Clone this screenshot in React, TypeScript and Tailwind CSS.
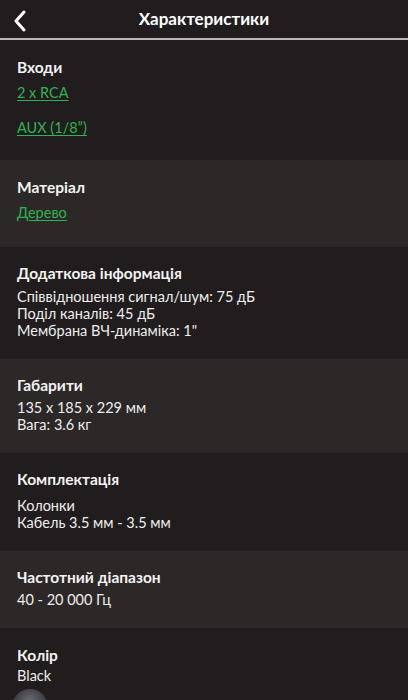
import { ReactNode } from 'react'

const font = { fontFamily: 'Lato, "Noto Sans", sans-serif' }

function Section({
  title,
  shade,
  children,
}: {
  title: string
  shade?: boolean
  children: ReactNode
}) {
  return (
    <section className={`px-[17px] pt-4 pb-5 ${shade ? 'bg-[#2c2828]' : 'bg-[#211d1e]'}`}>
      <h2 className="text-[15.5px] leading-5 font-bold text-[#f4f2f2]">{title}</h2>
      {children}
    </section>
  )
}

function Lines({ items, className = 'mt-1' }: { items: string[]; className?: string }) {
  return (
    <div className={`${className} text-[14.5px] leading-[17px] text-[#efeded]`}>
      {items.map((t) => (
        <div key={t}>{t}</div>
      ))}
    </div>
  )
}

export default function App() {
  return (
    <div className="w-[408px] h-[700px] overflow-hidden bg-[#211d1e]" style={font}>
      <header className="relative h-[38px] flex items-center justify-center border-b-2 border-[#b9b7b7] box-content">
        <button className="absolute left-[8px] top-[6px] p-1">
          <svg width="16" height="22" viewBox="0 0 16 22" fill="none">
            <path d="M12 2 L4 11 L12 20" stroke="#fff" strokeWidth="3" strokeLinecap="round" strokeLinejoin="round" />
          </svg>
        </button>
        <h1 className="text-[17px] font-bold text-white">Характеристики</h1>
      </header>

      <section className="px-[17px] pt-[17px] pb-[22px] bg-[#211d1e]">
        <h2 className="text-[15.5px] leading-5 font-bold text-[#f4f2f2]">Входи</h2>
        <div className="mt-[6px] flex flex-col gap-[15px] text-[14.5px] leading-5">
          <a className="text-[#2fb352] underline underline-offset-2">2 x RCA</a>
          <a className="text-[#2fb352] underline underline-offset-2">AUX (1/8”)</a>
        </div>
      </section>

      <section className="px-[17px] pt-[17px] pb-[24px] bg-[#2c2828]">
        <h2 className="text-[15.5px] leading-5 font-bold text-[#f4f2f2]">Матеріал</h2>
        <div className="mt-[6px] text-[14.5px] leading-5">
          <a className="text-[#2fb352] underline underline-offset-2">Дерево</a>
        </div>
      </section>

      <Section title="Додаткова інформація">
        <Lines
          className="mt-[5px]"
          items={[
            'Співвідношення сигнал/шум: 75 дБ',
            'Поділ каналів: 45 дБ',
            'Мембрана ВЧ-динаміка: 1"',
          ]}
        />
      </Section>

      <Section title="Габарити" shade>
        <Lines items={['135 x 185 x 229 мм', 'Вага: 3.6 кг']} />
      </Section>

      <Section title="Комплектація">
        <Lines className="mt-2" items={['Колонки', 'Кабель 3.5 мм - 3.5 мм']} />
      </Section>

      <Section title="Частотний діапазон" shade>
        <Lines items={['40 - 20 000 Гц']} />
      </Section>

      <section className="px-[17px] pt-[17px] bg-[#211d1e]">
        <h2 className="text-[15.5px] leading-5 font-bold text-[#f4f2f2]">Колір</h2>
        <Lines className="mt-[2px]" items={['Black']} />
        <div className="mt-[5px] -ml-[5px] w-9 h-9 rounded-full bg-[radial-gradient(circle_at_50%_35%,#6b6d74,#35363b_60%,#2a2a2e)]" />
      </section>
    </div>
  )
}
